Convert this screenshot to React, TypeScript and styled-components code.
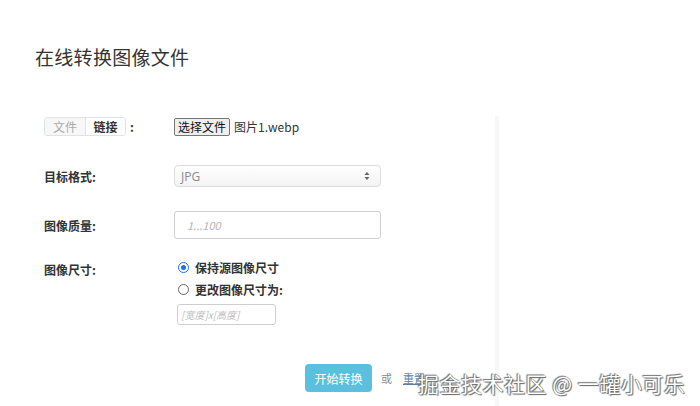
import React from "react";
import styled, { createGlobalStyle } from "styled-components";

const Global = createGlobalStyle`
  html, body { margin: 0; padding: 0; background: #fff; }
  body { font-family: "Noto Sans CJK SC", "Noto Sans", "Liberation Sans", sans-serif; color: #333; }
  * { box-sizing: border-box; }
`;

const Page = styled.div`
  position: relative;
  width: 700px;
  height: 406px;
  overflow: hidden;
  padding: 43px 0 0 35px;
`;

const Title = styled.h1`
  margin: 0;
  font-size: 19px;
  line-height: 28px;
  font-weight: 400;
  color: #333;
  letter-spacing: 0.3px;
`;

const Main = styled.div`
  display: flex;
  margin-top: 45px;
  height: 290px;
`;

const FormCol = styled.div`
  width: 460px;
  padding-left: 9px;
  display: flex;
  flex-direction: column;
`;

const Side = styled.div`
  flex: 1;
  border-left: 4px solid #f7f7f7;
`;

const Row = styled.div<{ $h: number; $mb: number; $top?: boolean }>`
  display: flex;
  align-items: ${(p) => (p.$top ? "flex-start" : "center")};
  height: ${(p) => p.$h}px;
  margin-bottom: ${(p) => p.$mb}px;
`;

const Label = styled.div`
  width: 130px;
  font-size: 12px;
  font-weight: 700;
  color: #333;
  display: flex;
  align-items: center;
`;

const Tabs = styled.div`
  display: flex;
  border: 1px solid #dde3ea;
  border-radius: 3px;
  height: 19px;
  overflow: hidden;
`;

const Tab = styled.span<{ $active?: boolean }>`
  width: 40px;
  display: flex;
  align-items: center;
  justify-content: center;
  font-size: 12px;
  font-weight: ${(p) => (p.$active ? 700 : 400)};
  color: ${(p) => (p.$active ? "#333" : "#aaa")};
  background: ${(p) => (p.$active ? "#fff" : "#f7f7f7")};
  & + & { border-left: 1px solid #e3e3e3; }
`;

const Colon = styled.span`
  margin-left: 4px;
  font-size: 12px;
  font-weight: 700;
`;

const FileWrap = styled.div`
  display: flex;
  align-items: center;
  gap: 4px;
  font-size: 12px;
  color: #333;
`;

const FileBtn = styled.button`
  height: 18px;
  padding: 0 3px;
  font-family: inherit;
  font-size: 12px;
  color: #111;
  background: #efefef;
  border: 1px solid #767676;
  border-radius: 2px;
  line-height: 14px;
`;

const Select = styled.div`
  width: 207px;
  height: 22px;
  border: 1px solid #dcdcdc;
  border-radius: 4px;
  background: linear-gradient(#fff, #f3f3f3);
  display: flex;
  align-items: center;
  justify-content: space-between;
  padding: 0 10px 0 6px;
  font-size: 12px;
  color: #888;
  font-family: "Open Sans", sans-serif;
`;

const Input = styled.div<{ $w: number; $h: number }>`
  width: ${(p) => p.$w}px;
  height: ${(p) => p.$h}px;
  border: 1px solid #cfcfcf;
  border-radius: 3px;
  display: flex;
  align-items: center;
  font-size: 11px;
  font-style: italic;
  color: #b4b4b4;
  padding-left: 12px;
`;

const RadioList = styled.div`
  display: flex;
  flex-direction: column;
  gap: 6px;
  padding-left: 4px;
  padding-top: 4px;
`;

const RadioRow = styled.label`
  display: flex;
  align-items: center;
  gap: 6px;
  font-size: 12px;
  font-weight: 700;
  color: #333;
  height: 16px;
`;

const Radio = styled.span<{ $on?: boolean }>`
  width: 11px;
  height: 11px;
  border-radius: 50%;
  border: 1px solid ${(p) => (p.$on ? "#1a73e8" : "#666")};
  display: flex;
  align-items: center;
  justify-content: center;
  &::after {
    content: "";
    width: 5px;
    height: 5px;
    border-radius: 50%;
    background: ${(p) => (p.$on ? "#1a73e8" : "transparent")};
  }
`;

const SizeInput = styled(Input)`
  margin-top: 1px;
  margin-left: -1px;
  padding-left: 3px;
  font-size: 10px;
  color: #c0c0c0;
`;

const Actions = styled.div`
  display: flex;
  align-items: center;
  padding-left: 261px;
  gap: 9px;
  font-size: 11px;
`;

const Primary = styled.button`
  width: 67px;
  height: 28px;
  border: none;
  border-radius: 4px;
  background: #5bc0de;
  color: #fff;
  font-family: inherit;
  font-size: 12px;
`;

const Or = styled.span`
  color: #888;
`;

const Reset = styled.a`
  color: #5a7ea8;
  text-decoration: underline;
  margin-left: 2px;
`;

const Watermark = styled.div`
  position: absolute;
  left: 418px;
  top: 368px;
  font-size: 21px;
  color: #fff;
  letter-spacing: 0.5px;
  text-shadow: 0 0 1px #555, 1px 1px 1px #666, -1px -1px 1px #777;
  white-space: nowrap;
`;

export default function App() {
  return (
    <>
      <Global />
      <Page>
        <Title>在线转换图像文件</Title>
        <Main>
          <FormCol>
            <Row $h={21} $mb={28}>
              <Label>
                <Tabs>
                  <Tab>文件</Tab>
                  <Tab $active>链接</Tab>
                </Tabs>
                <Colon>:</Colon>
              </Label>
              <FileWrap>
                <FileBtn>选择文件</FileBtn>
                <span>图片1.webp</span>
              </FileWrap>
            </Row>
            <Row $h={22} $mb={24}>
              <Label>目标格式:</Label>
              <Select>
                <span>JPG</span>
                <svg width="6" height="10" viewBox="0 0 6 10">
                  <path d="M3 1 L5.5 4 H0.5 Z M3 9 L0.5 6 H5.5 Z" fill="#666" />
                </svg>
              </Select>
            </Row>
            <Row $h={28} $mb={16}>
              <Label>图像质量:</Label>
              <Input $w={207} $h={28}>1...100</Input>
            </Row>
            <Row $h={70} $mb={39} $top>
              <Label style={{ height: 28 }}>图像尺寸:</Label>
              <RadioList>
                <RadioRow>
                  <Radio $on />
                  保持源图像尺寸
                </RadioRow>
                <RadioRow>
                  <Radio />
                  更改图像尺寸为:
                </RadioRow>
                <SizeInput $w={99} $h={21}>[宽度]x[高度]</SizeInput>
              </RadioList>
            </Row>
            <Actions>
              <Primary>开始转换</Primary>
              <Or>或</Or>
              <Reset>重置</Reset>
            </Actions>
          </FormCol>
          <Side />
        </Main>
        <Watermark>掘金技术社区 @ 一罐小可乐</Watermark>
      </Page>
    </>
  );
}
